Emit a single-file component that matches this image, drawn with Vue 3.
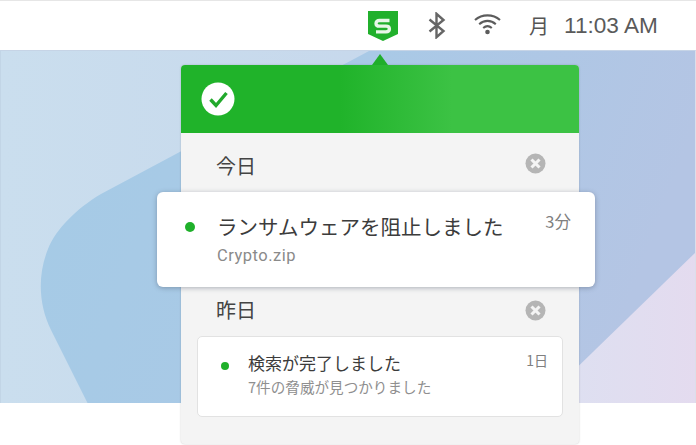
<script setup>
const notifications = {
  today: { title: 'ランサムウェアを阻止しました', sub: 'Crypto.zip', time: '3分' },
  yesterday: { title: '検索が完了しました', sub: '7件の脅威が見つかりました', time: '1日' },
}
</script>

<template>
  <div class="screen">
    <header class="menubar">
      <svg class="shield" width="32" height="32" viewBox="0 0 32 32">
        <path d="M1 1H31V24L16 31L1 24Z" fill="#21b02c" />
        <path d="M22.5 10.5H12.5Q9 10.5 9 13.4Q9 16.2 12.5 16.2H19Q22.4 16.2 22.4 19Q22.4 21.8 19 21.8H9" fill="none" stroke="#e8f7e8" stroke-width="3.3" />
      </svg>
      <svg class="bt" width="18" height="27" viewBox="0 0 18 27">
        <path d="M1.5 7.5L15.5 19L8.5 25.2V1.8L15.5 8L1.5 19.5" fill="none" stroke="#666" stroke-width="2.4" />
      </svg>
      <svg class="wifi" width="27" height="21" viewBox="0 0 27 21">
        <g fill="none" stroke="#5c5c5c" stroke-width="2.1">
          <path d="M1 6C8 -0.2 19 -0.2 26 6" />
          <path d="M5.2 10.2C10 5.8 17 5.8 21.8 10.2" />
          <path d="M9.2 14C12 11.6 15 11.6 17.8 14" />
        </g>
        <circle cx="13.5" cy="18" r="2.3" fill="#5c5c5c" />
      </svg>
      <span class="day">月</span>
      <span class="clock">11:03 AM</span>
    </header>

    <main class="desktop">
      <svg class="wallpaper" width="696" height="353" viewBox="0 0 696 353" preserveAspectRatio="none">
        <defs>
          <linearGradient id="sky" x1="0" y1="0" x2="1" y2="0">
            <stop offset="0" stop-color="#cadeee" />
            <stop offset="1" stop-color="#c4d3ea" />
          </linearGradient>
          <linearGradient id="blob" x1="0" y1="0" x2="1" y2="0.2">
            <stop offset="0" stop-color="#a5cbe6" />
            <stop offset="0.5" stop-color="#a9c9e6" />
            <stop offset="1" stop-color="#b4c5e4" />
          </linearGradient>
          <linearGradient id="lilac" x1="0" y1="0" x2="1" y2="0">
            <stop offset="0" stop-color="#dde0f1" />
            <stop offset="1" stop-color="#e4dbef" />
          </linearGradient>
        </defs>
        <rect width="696" height="353" fill="url(#sky)" />
        <path d="M368 0H696V353H87L50 279C38 255 36 225 47 198C55 178 75 158 100 143Z" fill="url(#blob)" />
        <path d="M696 200V353H560V332Z" fill="url(#lilac)" />
      </svg>
    </main>

    <section class="panel">
      <i class="caret"></i>
      <div class="panel-head">
        <svg width="34" height="34" viewBox="0 0 34 34">
          <circle cx="17" cy="17" r="16.5" fill="#fff" />
          <path d="M9.5 17.5L15 23.5L25.5 11" fill="none" stroke="#22a92c" stroke-width="3.4" />
        </svg>
      </div>
      <div class="day-row day-today">
        <span>今日</span>
        <svg class="close" width="21" height="21" viewBox="0 0 21 21">
          <circle cx="10.5" cy="10.5" r="10" fill="#b5b5b5" />
          <path d="M6.5 6.5L14.5 14.5M14.5 6.5L6.5 14.5" stroke="#f4f4f4" stroke-width="3.1" />
        </svg>
      </div>
      <div class="day-row day-yesterday">
        <span>昨日</span>
        <svg class="close" width="21" height="21" viewBox="0 0 21 21">
          <circle cx="10.5" cy="10.5" r="10" fill="#b5b5b5" />
          <path d="M6.5 6.5L14.5 14.5M14.5 6.5L6.5 14.5" stroke="#f4f4f4" stroke-width="3.1" />
        </svg>
      </div>
      <article class="small-card">
        <i class="dot dot-small"></i>
        <div class="card-text">
          <p class="small-title">{{ notifications.yesterday.title }}</p>
          <p class="small-sub">{{ notifications.yesterday.sub }}</p>
        </div>
        <span class="small-time">{{ notifications.yesterday.time }}</span>
      </article>
    </section>

    <article class="big-card">
      <i class="dot"></i>
      <div class="card-text">
        <p class="big-title">{{ notifications.today.title }}</p>
        <p class="big-sub">{{ notifications.today.sub }}</p>
      </div>
      <span class="big-time">{{ notifications.today.time }}</span>
    </article>
  </div>
</template>

<style scoped>
.screen {
  position: relative;
  width: 696px;
  height: 445px;
  overflow: hidden;
  background: #fff;
  font-family: "Noto Sans CJK JP", "Noto Sans", sans-serif;
  color: #444;
}

.menubar {
  box-sizing: border-box;
  height: 50px;
  display: flex;
  align-items: center;
  padding: 0 38px 0 367px;
  background: #fff;
  border-top: 1px solid #e6e6e6;
}

.shield {
  flex: none;
}

.bt {
  margin-left: 29px;
  flex: none;
}

.wifi {
  margin-left: 28px;
  margin-top: -2px;
  flex: none;
}

.day {
  margin-left: 28px;
  font-size: 20px;
  color: #555;
}

.clock {
  margin-left: 15px;
  font-family: "Liberation Sans", Arial, sans-serif;
  font-size: 22.6px;
  color: #5a5a5a;
  white-space: nowrap;
}

.desktop {
  height: 353px;
  border-top: 1px solid #c6d4e6;
  border-left: 1px solid #c2d5e6;
  border-right: 1px solid #dcdfea;
  box-sizing: border-box;
  overflow: hidden;
}

.wallpaper {
  display: block;
}

.panel {
  position: absolute;
  left: 181px;
  top: 65px;
  width: 398px;
  height: 379px;
  box-sizing: border-box;
  background: #f4f4f4;
  border-radius: 4px;
  box-shadow: 0 0 2px rgba(0, 0, 0, 0.22);
}

.caret {
  position: absolute;
  left: 191px;
  top: -11px;
  width: 0;
  height: 0;
  border-left: 8px solid transparent;
  border-right: 8px solid transparent;
  border-bottom: 11px solid #20ae2b;
}

.panel-head {
  box-sizing: border-box;
  height: 68px;
  padding: 17px 20px;
  border-radius: 4px 4px 0 0;
  background: linear-gradient(90deg, #20b32a 0, #20b32a 40%, #3cc244 68%, #3cc244 100%);
}

.panel-head svg {
  display: block;
}

.day-row {
  position: absolute;
  left: 35px;
  right: 33px;
  display: flex;
  justify-content: space-between;
  align-items: center;
  font-size: 20px;
  line-height: 28px;
  color: #444;
}

.day-today {
  top: 87px;
}

.day-yesterday {
  top: 231px;
}

.close {
  flex: none;
}

.day-today .close {
  margin-top: -6px;
}

.big-card {
  position: absolute;
  left: 157px;
  top: 192px;
  width: 438px;
  height: 95px;
  box-sizing: border-box;
  display: flex;
  align-items: flex-start;
  padding: 20px 24px 0 28px;
  background: #fff;
  border-radius: 6px;
  box-shadow: 0 1px 5px rgba(60, 70, 90, 0.4);
}

.dot {
  flex: none;
  width: 10px;
  height: 10px;
  margin: 10px 22px 0 0;
  border-radius: 50%;
  background: #1fb02a;
}

.card-text {
  flex: 1;
  min-width: 0;
  white-space: nowrap;
}

.big-title {
  margin: 0;
  font-size: 20.5px;
  line-height: 28px;
  color: #3c3c3c;
}

.big-sub {
  margin: 6px 0 0;
  font-family: Roboto, "Noto Sans", sans-serif;
  font-size: 16.5px;
  line-height: 20px;
  letter-spacing: 0.5px;
  color: #8a8a8a;
}

.big-time {
  margin-top: -1px;
  font-size: 16.5px;
  line-height: 20px;
  color: #808080;
}

.small-card {
  position: absolute;
  left: 16px;
  top: 271px;
  width: 366px;
  height: 81px;
  box-sizing: border-box;
  display: flex;
  align-items: flex-start;
  padding: 14px 14px 0 23px;
  background: #fff;
  border: 1px solid #e2e2e2;
  border-radius: 5px;
}

.dot-small {
  width: 8px;
  height: 8px;
  margin: 11px 19px 0 0;
}

.small-title {
  margin: 0;
  font-size: 17px;
  line-height: 24px;
  color: #3c3c3c;
}

.small-sub {
  margin: 3px 0 0;
  font-size: 14.6px;
  line-height: 18px;
  color: #8f8f8f;
}

.small-time {
  margin-top: -1px;
  font-size: 14px;
  line-height: 20px;
  color: #808080;
}
</style>
